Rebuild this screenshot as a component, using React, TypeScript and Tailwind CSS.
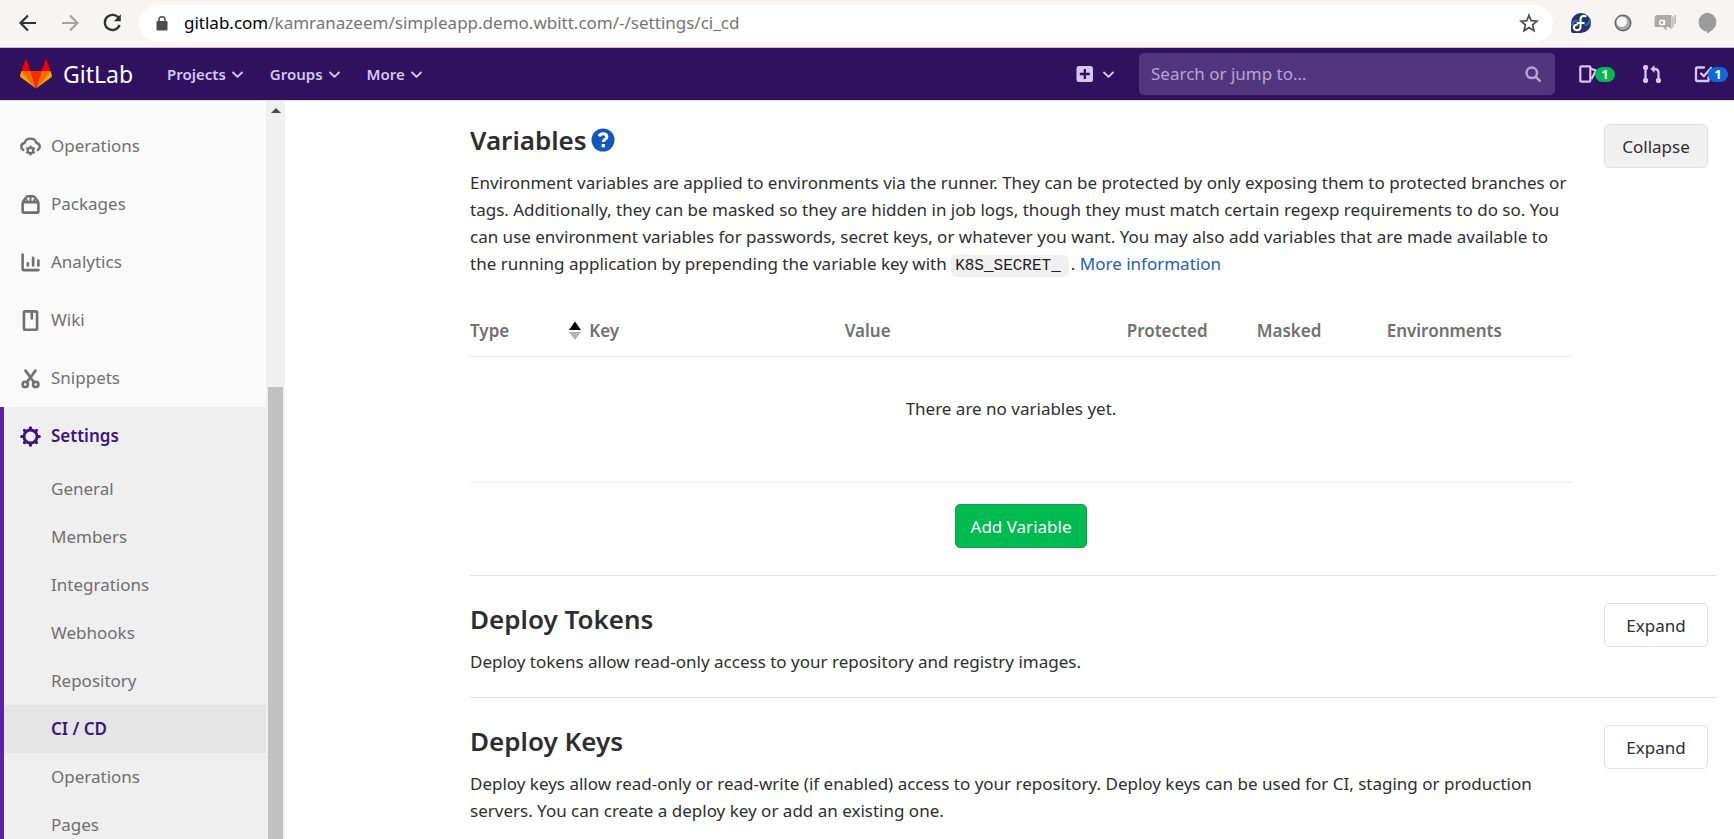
import React from "react";

type IconProps = { children: React.ReactNode; className?: string };

function Icon({ children, className = "size-[21px]" }: IconProps) {
  return (
    <svg
      viewBox="0 0 16 16"
      className={`${className} shrink-0`}
      fill="none"
      stroke="currentColor"
      strokeWidth="2"
      strokeLinecap="round"
      strokeLinejoin="round"
      aria-hidden="true"
    >
      {children}
    </svg>
  );
}

const Chevron = () => (
  <Icon className="size-[13px]">
    <path d="M2.5 5.5 8 11l5.5-5.5" strokeWidth="2.3" />
  </Icon>
);

const CloudGear = () => (
  <Icon>
    <path d="M2.4 10.600A2.600 2.600 0 0 1 1 8.200c0-1.500 1.100-2.700 2.500-2.900A4.600 4.600 0 0 1 8 2a4.600 4.600 0 0 1 4.500 3.300C13.900 5.500 15 6.700 15 8.200a2.600 2.600 0 0 1-1.400 2.400" strokeWidth="1.900" />
    <circle cx="8" cy="11" r="2.100" strokeWidth="1.800" />
    <path d="M8 7.800v.8M8 13.400v.8M5.200 9.400l.7.4M10.100 12.200l.7.4M5.200 12.600l.7-.4M10.100 9.800l.7-.4" strokeWidth="1.500" />
  </Icon>
);
const PackageIcon = () => (
  <Icon>
    <rect x="2" y="6.200" width="12" height="8" rx="1" strokeWidth="2" />
    <path d="M2.300 5.800 4.600 2.600C5 2 5.500 1.800 6 1.800h4c.5 0 1 .2 1.400.8l2.300 3.200" strokeWidth="1.900" />
    <path d="M8 2v3.500M5.200 5.500v-.9" strokeWidth="1.500" />
    <path d="M10.800 5.500v-.9" strokeWidth="1.500" />
  </Icon>
);
const ChartIcon = () => (
  <Icon>
    <path d="M2 2v10.800c0 .6.4 1 1 1h11M6 8.600v1.600M10 4.500v5.700M14 6.500v3.700" strokeWidth="2" />
  </Icon>
);
const BookIcon = () => (
  <Icon>
    <rect x="3" y="1" width="10" height="14" rx="1" strokeWidth="2" />
    <path d="M9 1.500v5" strokeWidth="2" />
  </Icon>
);
const ScissorsIcon = () => (
  <Icon>
    <circle cx="4" cy="12.500" r="2" strokeWidth="2" />
    <circle cx="12" cy="12.500" r="2" strokeWidth="2" />
    <path d="M4.200 2l6.600 9M11.800 2l-3 4.100M7 8.300l-1.700 2.500" strokeWidth="2" />
  </Icon>
);
const GearIcon = () => (
  <Icon>
    <circle cx="8" cy="8" r="5" strokeWidth="2.200" />
    <path d="M8 1.300v1.200M8 13.500v1.200M1.300 8h1.200M13.500 8h1.200M3.400 3.400l.7.7M11.900 11.900l.7.7M3.400 12.600l.7-.7M11.900 4.100l.7-.7" strokeWidth="2.400" />
  </Icon>
);

const sections = [
  { label: "Operations", icon: <CloudGear /> },
  { label: "Packages", icon: <PackageIcon /> },
  { label: "Analytics", icon: <ChartIcon /> },
  { label: "Wiki", icon: <BookIcon /> },
  { label: "Snippets", icon: <ScissorsIcon /> },
];

const settingsPages = [
  "General",
  "Members",
  "Integrations",
  "Webhooks",
  "Repository",
  "CI / CD",
  "Operations",
  "Pages",
];

function BrowserBar() {
  return (
    <div className="flex h-12 shrink-0 items-center border-b border-[#c3c0bb] bg-[#f6f5f3] pr-4 pl-[17px] pb-px">
      <div className="flex w-[122px] shrink-0 items-center gap-5 text-[#2e3436]">
        <button aria-label="Back">
          <svg viewBox="0 0 22 22" className="size-[22px]" fill="none" stroke="currentColor" strokeWidth="2.200">
            <path d="M19 11H4M11 3.500 3.500 11l7.500 7.500" />
          </svg>
        </button>
        <button aria-label="Forward" className="text-[#a3a4a4]">
          <svg viewBox="0 0 22 22" className="size-[22px]" fill="none" stroke="currentColor" strokeWidth="2.200">
            <path d="M3 11h15M11 3.500l7.500 7.500-7.500 7.500" />
          </svg>
        </button>
        <button aria-label="Reload">
          <svg viewBox="0 0 22 22" className="size-[22px]" fill="none" stroke="currentColor" strokeWidth="2.300">
            <path d="M17.800 6.200A7.600 7.600 0 1 0 18.600 13" />
            <path d="M19.800 2.300v7h-7z" fill="currentColor" stroke="none" />
          </svg>
        </button>
      </div>
      <div className="flex h-[37px] min-w-0 flex-1 items-center rounded-full bg-white pr-3.5 pl-[17px]">
        <svg viewBox="0 0 12 15" className="mr-4 h-[15px] w-3 shrink-0" aria-hidden="true">
          <rect x="0.500" y="5" width="11" height="9.500" rx="1.200" fill="#4d4d4d" />
          <path d="M3 6V3.800a3 3 0 0 1 6 0V6" fill="none" stroke="#4d4d4d" strokeWidth="1.500" />
        </svg>
        <span className="flex-1 truncate text-[17px] leading-6 text-[#757575]">
          <span className="text-black">gitlab.com</span>/kamranazeem/simpleapp.demo.wbitt.com/-/settings/ci_cd
        </span>
        <button aria-label="Bookmark this page">
          <svg viewBox="0 0 20 20" className="size-5" fill="none" stroke="#4a4a4a" strokeWidth="1.700">
            <path d="m10 2.200 2.200 5.500 5.900.4-4.500 3.800 1.400 5.800-5-3.200-5 3.200 1.400-5.800L1.900 8.100l5.900-.4z" />
          </svg>
        </button>
      </div>
      <div className="ml-[17px] flex shrink-0 items-center gap-5">
        <svg viewBox="0 0 22 22" className="size-[22px]" aria-hidden="true">
          <path d="M11 1a10 10 0 1 1 0 20H3a2 2 0 0 1-2-2v-8A10 10 0 0 1 11 1z" fill="#25346f" />
          <path d="M1.800 14a5.400 5.400 0 0 1 5.700-5.500M20 7.500a5.400 5.400 0 0 1-5.500 5.500" stroke="#3c6eb4" strokeWidth="2" fill="none" />
          <path d="M15.500 4.200c-2.800-1-5 .6-5 3.200v7.200c0 2.400-1.600 3.700-3.500 3.700-1.800 0-3.100-1.300-3.100-2.800 0-1.700 1.300-2.800 3-2.800M7.500 11h6.200" stroke="#fff" strokeWidth="2.100" fill="none" strokeLinecap="round" />
        </svg>
        <svg viewBox="0 0 22 22" className="size-[22px]" aria-hidden="true">
          <circle cx="11" cy="11" r="8.500" fill="#666" />
          <circle cx="11" cy="11" r="7" fill="#a9a9a9" />
          <circle cx="9.800" cy="9.800" r="5.200" fill="#f7f7f7" />
        </svg>
        <svg viewBox="0 0 22 22" className="size-[22px]" aria-hidden="true">
          <path d="M2.500 3h15v14.500l-2.500-2.500h-2.500v3.500L8.500 15H.500V5z" fill="#ababab" />
          <path d="M19 4.500v11M21.200 3v9" stroke="#b5b5b5" strokeWidth="1.500" />
          <circle cx="8" cy="10.500" r="2.200" fill="none" stroke="#fff" strokeWidth="1.500" />
          <path d="M10.500 8v5" stroke="#fff" strokeWidth="1.500" />
        </svg>
        <svg viewBox="0 0 22 22" className="size-[22px]" aria-hidden="true">
          <path d="M11 .8a9.400 9.400 0 0 1 9.400 9.400c0 5-4.400 8.400-9.400 11.300v-2A9.400 9.400 0 0 1 11 .8z" fill="#9c9c9c" />
        </svg>
      </div>
    </div>
  );
}

function GitLabBar() {
  return (
    <header className="flex h-[52px] shrink-0 items-center bg-[#2f1160] pr-1.5 pl-5 text-[#d5c6f2]">
      <a href="#home" className="flex items-center gap-[11px] text-white">
        <svg viewBox="0 0 32 30" className="h-[30px] w-8" aria-hidden="true">
          <path d="M16 29.500 21.500 12h-11z" fill="#ff2a00" />
          <path d="M16 29.500 10.500 12H1.400z" fill="#ff6a00" />
          <path d="M16 29.500 21.500 12h9.100z" fill="#ff6a00" />
          <path d="M1.400 12 .1 16.400c-.2.800 0 1.400.6 1.900L16 29.500z" fill="#ffa200" />
          <path d="m30.600 12 1.300 4.400c.2.800 0 1.400-.6 1.900L16 29.500z" fill="#ffa200" />
          <path d="M1.400 12h9.100L6.400.3c-.1-.4-.6-.4-.7 0zM30.600 12h-9.100L25.600.3c.1-.4.6-.4.7 0z" fill="#f50000" />
        </svg>
        <span className="text-[23px] leading-8">GitLab</span>
      </a>
      <nav className="ml-[34px] flex items-center gap-[26px] text-[15px] leading-5 font-semibold">
        {["Projects", "Groups", "More"].map((label) => (
          <button key={label} className="flex items-center gap-[5px]">
            {label}
            <Chevron />
          </button>
        ))}
      </nav>
      <div className="ml-auto flex items-center">
        <button aria-label="New" className="mr-6 flex items-center gap-2">
          <svg viewBox="0 0 18 18" className="size-[18px]" aria-hidden="true">
            <rect x="0.500" y="1" width="16.500" height="16" rx="2.500" fill="currentColor" />
            <path d="M8.800 4v10M3.800 9h10" stroke="#2f1160" strokeWidth="2.300" />
          </svg>
          <Chevron />
        </button>
        <label className="flex h-[42px] w-[416px] items-center rounded-[5px] bg-[#52367d] pr-3.5 pl-3">
          <input
            aria-label="Search or jump to"
            placeholder="Search or jump to…"
            className="min-w-0 flex-1 bg-transparent text-[17px] leading-6 outline-none placeholder:text-[#b6a3da]"
          />
          <svg viewBox="0 0 16 16" className="size-4 text-[#b6a3da]" fill="none" stroke="currentColor" strokeWidth="2.500" strokeLinecap="round" aria-hidden="true">
            <circle cx="6.800" cy="6.800" r="5.300" />
            <path d="m11 11 3.800 3.800" />
          </svg>
        </label>
        <a href="#issues" className="ml-6 flex items-center" aria-label="Issues, 1">
          <svg viewBox="0 0 18 18" className="size-[18px]" fill="none" stroke="currentColor" strokeWidth="2.200" strokeLinejoin="round" aria-hidden="true">
            <rect x="1.300" y="1.300" width="10" height="15.400" rx="1" />
            <path d="M11.500 3.500 17 5.500 12.500 14" />
          </svg>
          <span className="-ml-0.5 w-5 rounded-full bg-[#00b84f] text-center text-[13px] leading-[15px] font-bold text-white">1</span>
        </a>
        <a href="#merge-requests" className="ml-7" aria-label="Merge requests">
          <svg viewBox="0 0 18 18" className="size-[18px]" fill="none" stroke="currentColor" strokeWidth="2.300" aria-hidden="true">
            <path d="M2.500 3v12M15.500 15V8c0-2.500-1.500-4-4-4H10" />
            <circle cx="2.500" cy="2.500" r="1.500" fill="currentColor" />
            <circle cx="2.500" cy="15.500" r="1.500" fill="currentColor" />
            <circle cx="15.500" cy="15.500" r="1.500" fill="currentColor" />
            <path d="M11.500 0v8L7.500 4z" fill="currentColor" stroke="none" />
          </svg>
        </a>
        <a href="#todos" className="ml-[33px] flex items-center" aria-label="To-Do list, 1">
          <svg viewBox="0 0 18 18" className="size-[18px]" fill="none" stroke="currentColor" strokeWidth="2.300" strokeLinecap="round" strokeLinejoin="round" aria-hidden="true">
            <path d="M10 2.500H3c-.6 0-1 .4-1 1V15c0 .6.400 1 1 1h11.500v-4" />
            <path d="m7 8.500 2.800 2.700L17 3" />
          </svg>
          <span className="-ml-1 w-5 rounded-full bg-[#1068d8] text-center text-[13px] leading-[15px] font-bold text-white">1</span>
        </a>
      </div>
    </header>
  );
}

function Sidebar() {
  return (
    <aside className="flex w-[285px] shrink-0 overflow-hidden">
      <nav className="flex-1 bg-[#fafafa] pt-4 text-[17px] leading-6 text-[#707070]">
        {sections.map(({ label, icon }) => (
          <a key={label} href={`#${label.toLowerCase()}`} className="flex h-[58px] items-center gap-2.5 pl-5">
            {icon}
            {label}
          </a>
        ))}
        <div className="border-l-4 border-[#5a22a8] bg-[#efefef]">
          <a href="#settings" className="flex h-[58px] items-center gap-2.5 pl-4 font-semibold text-[#3b1584]">
            <GearIcon />
            Settings
          </a>
          {settingsPages.map((page) => (
            <a
              key={page}
              href={`#settings-${page.toLowerCase().replace(/\W+/g, "-")}`}
              className={
                page === "CI / CD"
                  ? "flex h-12 items-center bg-[#e5e5e5] pl-[47px] font-semibold text-[#3b1584]"
                  : "flex h-12 items-center pl-[47px]"
              }
            >
              {page}
            </a>
          ))}
        </div>
      </nav>
      <div className="flex w-[19px] flex-col items-center bg-[#f0f0f0] pt-[7px]">
        <svg viewBox="0 0 10 5" className="h-[5px] w-2.5" aria-hidden="true">
          <path d="M0 5 5 0l5 5z" fill="#4a4a4a" />
        </svg>
        <div className="mt-[274px] w-[15px] flex-1 bg-[#c1c1c1]" />
      </div>
    </aside>
  );
}

type PanelProps = {
  title: React.ReactNode;
  text: React.ReactNode;
  expanded?: boolean;
  children?: React.ReactNode;
};

function Panel({ title, text, expanded = false, children }: PanelProps) {
  return (
    <section className="flex items-start border-t border-[#e1e1e1] pt-[27px] pr-2 first:border-t-0 first:pt-[23px]">
      <div className="min-w-0 flex-1">
        <h2 className="flex items-center gap-1 text-[26px] leading-8 font-semibold">{title}</h2>
        <p className="mt-[13px] mb-[22px]">{text}</p>
        {children}
      </div>
      <button
        className={
          expanded
            ? "ml-8 h-11 w-[104px] shrink-0 rounded-[5px] border border-[#e1e1e1] bg-[#f0f0f0]"
            : "ml-8 h-11 w-[104px] shrink-0 rounded-[5px] border border-[#e1e1e1] bg-white"
        }
      >
        {expanded ? "Collapse" : "Expand"}
      </button>
    </section>
  );
}

function VariablesTable() {
  return (
    <>
      <table className="mt-[27px] w-full table-fixed border-collapse text-left">
        <thead>
          <tr className="border-b border-[#ededed] text-[#707070] [&>th]:py-3 [&>th]:font-semibold">
            <th className="w-[9%]">Type</th>
            <th className="w-[25%]">
              <span className="flex items-center gap-2">
                <svg viewBox="0 0 12 19" className="h-[19px] w-3" aria-hidden="true">
                  <path d="M0 9 6 .500 12 9z" fill="#000" />
                  <path d="M0 11h12l-6 8z" fill="#b4b4b4" />
                </svg>
                Key
              </span>
            </th>
            <th className="w-[282px]">Value</th>
            <th className="w-[130px]">Protected</th>
            <th className="w-[130px]">Masked</th>
            <th>Environments</th>
          </tr>
        </thead>
        <tbody>
          <tr className="border-b border-[#ededed]">
            <td colSpan={6} className="h-[126px] pt-[38px] pr-5 text-center align-top">
              There are no variables yet.
            </td>
          </tr>
        </tbody>
      </table>
      <div className="flex justify-center pt-[21px] pb-[27px]">
        <button className="h-11 rounded-[5px] border border-[#12a04b] bg-[#00bb50] px-[15px] text-white">
          Add Variable
        </button>
      </div>
    </>
  );
}

export default function App() {
  return (
    <div className="flex h-screen flex-col overflow-hidden bg-white font-['Noto_Sans',sans-serif] text-[#2e2e2e]">
      <BrowserBar />
      <GitLabBar />
      <div className="flex min-h-0 flex-1 border-t border-[#e1e1e1]">
        <Sidebar />
        <main className="min-w-0 flex-1 overflow-hidden pr-[18px] pl-[185px] text-[17px] leading-[27px]">
          <Panel
            expanded
            title={
              <>
                Variables
                <a href="#variables-help" aria-label="Help">
                  <svg viewBox="0 0 24 24" className="size-6" aria-hidden="true">
                    <circle cx="12" cy="12" r="11.500" fill="#1058c0" />
                    <path d="M8 8.200C9 6.400 10.300 5.700 12 5.700c2.300 0 3.900 1.200 3.900 3 0 2.800-3.600 2.500-3.600 5.300" fill="none" stroke="#fff" strokeWidth="3" />
                    <path d="M10.600 16h3.400v3.300h-3.400z" fill="#fff" />
                  </svg>
                </a>
              </>
            }
            text={
              <>
                Environment variables are applied to environments via the runner. They can be protected by only exposing
                them to protected branches or tags. Additionally, they can be masked so they are hidden in job logs,
                though they must match certain regexp requirements to do so. You can use environment variables for
                passwords, secret keys, or whatever you want. You may also add variables that are made available to the
                running application by prepending the variable key with{" "}
                <code className="mr-0.5 rounded-[5px] bg-[#f0f0f0] py-0.5 pr-2 pl-1 font-['Liberation_Mono',monospace] text-base text-[#1f1f1f]">
                  K8S_SECRET_
                </code>
                .{" "}
                <a href="#more-information" className="text-[#1b61bf]">
                  More information
                </a>
              </>
            }
          >
            <VariablesTable />
          </Panel>
          <Panel
            title="Deploy Tokens"
            text="Deploy tokens allow read-only access to your repository and registry images."
          />
          <Panel
            title="Deploy Keys"
            text="Deploy keys allow read-only or read-write (if enabled) access to your repository. Deploy keys can be used for CI, staging or production servers. You can create a deploy key or add an existing one."
          />
        </main>
      </div>
    </div>
  );
}
